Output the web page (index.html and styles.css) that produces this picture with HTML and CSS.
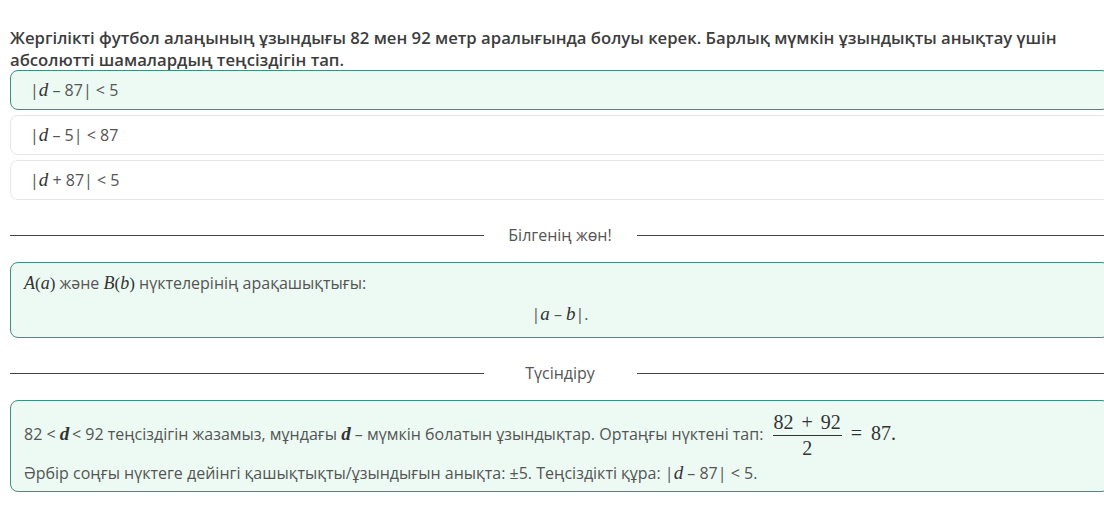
FILE: index.html
```html
<!DOCTYPE html>
<html lang="kk">
<head>
    <meta charset="UTF-8">
    <meta name="viewport" content="width=device-width, initial-scale=1.0">
    <title>Абсолютті шамалардың теңсіздігі</title>
    <link rel="stylesheet" href="styles.css">
</head>
<body>
    <div class="container">
        <h1 class="question">Жергілікті футбол алаңының ұзындығы 82 мен 92 метр аралығында болуы керек. Барлық мүмкін ұзындықты анықтау үшін абсолютті шамалардың теңсіздігін тап.</h1>

        <!-- Answer options -->
        <div class="options">
            <div class="option selected">|<span class="var">d</span> – 87| &lt; 5</div>
            <div class="option">|<span class="var">d</span> – 5| &lt; 87</div>
            <div class="option">|<span class="var">d</span> + 87| &lt; 5</div>
        </div>

        <!-- Hint -->
        <div class="divider"><span class="divider-line"></span><span class="divider-text">Білгенің жөн!</span><span class="divider-line"></span></div>
        <div class="note hint">
            <p><span class="mvar">A</span><span class="mpar">(</span><span class="mvar">a</span><span class="mpar">)</span> және <span class="mvar">B</span><span class="mpar">(</span><span class="mvar">b</span><span class="mpar">)</span> нүктелерінің арақашықтығы:</p>
            <p class="formula">|<span class="var">a</span> – <span class="var">b</span>|.</p>
        </div>

        <!-- Explanation -->
        <div class="divider second"><span class="divider-line"></span><span class="divider-text">Түсіндіру</span><span class="divider-line"></span></div>
        <div class="note explain">
            <p class="with-frac">82 &lt; <span class="bvar">d</span>&thinsp;&lt; 92 теңсіздігін жазамыз, мұндағы <span class="bvar">d</span> – мүмкін болатын ұзындықтар. Ортаңғы нүктені тап: <span class="frac"><span class="num">82 + 92</span><span class="den">2</span></span><span class="tex"> = 87.</span></p>
            <p>Әрбір соңғы нүктеге дейінгі қашықтықты/ұзындығын анықта: ±5. Теңсіздікті құра: |<span class="var">d</span> – 87| &lt; 5.</p>
        </div>
    </div>
</body>
</html>
```

FILE: styles.css
```css
html, body {
    overflow: hidden;
}

body {
    margin: 0;
    padding: 27px 0 0 10px;
    background-color: #fff;
    font-family: "Open Sans", "Noto Sans", sans-serif;
    color: #444;
}

.container {
    width: 1100px;
}

.question {
    margin: 0;
    font-size: 16.7px;
    line-height: 21.5px;
    font-weight: 600;
    color: #3d3d3d;
}

.options {
    display: flex;
    flex-direction: column;
    gap: 5px;
}

.option {
    height: 38px;
    line-height: 38px;
    padding: 0 19px;
    border: 1px solid #e6e6e6;
    border-radius: 8px;
    font-size: 16px;
    color: #555;
}

.option.selected {
    border-color: #3e8f7f;
    background-color: #ecfaf3;
}

.var {
    font-family: "Liberation Serif", serif;
    font-style: italic;
    font-size: 19px;
    color: #333;
}

.mvar {
    font-family: "Liberation Serif", serif;
    font-style: italic;
    font-size: 18px;
    color: #333;
}

.mpar {
    font-family: "Liberation Serif", serif;
    font-size: 17px;
    color: #333;
}

.bvar {
    font-family: "Liberation Serif", serif;
    font-style: italic;
    font-weight: 700;
    font-size: 19px;
    color: #333;
}

.divider {
    display: flex;
    align-items: center;
    height: 20px;
    margin: 25px 0 17px;
}

.divider.second {
    margin-top: 25px;
}

.divider-line {
    flex: 1;
    border-top: 1px solid #444;
}

.divider-text {
    width: 153px;
    text-align: center;
    font-size: 16px;
    color: #555;
}

.note {
    border: 1px solid #3e8f7f;
    border-radius: 8px;
    background-color: #ecfaf3;
    padding: 0 13px;
    font-size: 16px;
    color: #555;
}

.note p {
    margin: 0;
}

.hint {
    padding-top: 9px;
    padding-bottom: 12px;
}

.hint p {
    line-height: 22px;
}

.hint .formula {
    margin-top: 8px;
    text-align: center;
}

.explain {
    font-size: 16px;
    padding-top: 6px;
    padding-bottom: 5px;
}

.explain p {
    line-height: 26px;
}

.explain .with-frac {
    line-height: 52px;
}

.frac {
    display: inline-flex;
    flex-direction: column;
    vertical-align: middle;
    font-family: "Liberation Serif", serif;
    font-size: 20px;
    line-height: 23px;
    word-spacing: 3px;
    color: #333;
    text-align: center;
    margin-left: 5px;
}

.frac .num {
    padding: 0 1px 1px;
    border-bottom: 1px solid #333;
}

.frac .den {
    padding-top: 1px;
}

.tex {
    font-family: "Liberation Serif", serif;
    font-size: 20px;
    word-spacing: 4px;
    color: #333;
}
```
